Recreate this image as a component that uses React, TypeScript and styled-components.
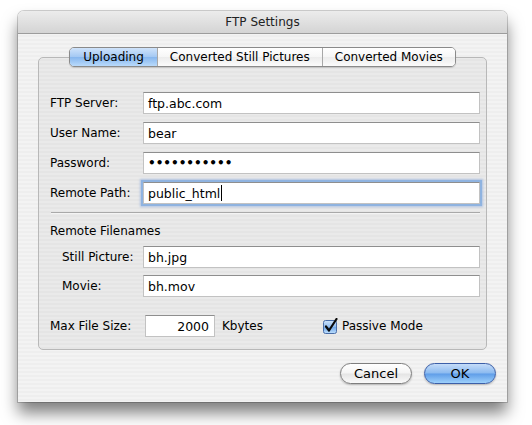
import React from 'react';
import styled, { createGlobalStyle } from 'styled-components';

const GlobalStyle = createGlobalStyle`
    html, body {
        margin: 0;
        padding: 0;
        background: #ffffff;
    }
    body {
        font-family: 'DejaVu Sans', 'Liberation Sans', sans-serif;
        font-size: 12px;
        color: #000;
    }
`;

const Page = styled.div`
    width: 532px;
    height: 425px;
    padding: 11px 0 0 18px;
    box-sizing: border-box;
`;

const Window = styled.div`
    width: 489px;
    height: 391px;
    border-radius: 6px 6px 0 0;
    overflow: hidden;
    box-shadow: 0 0 0 1px rgba(0, 0, 0, 0.18), 0 11px 16px rgba(0, 0, 0, 0.5);
    display: flex;
    flex-direction: column;
    background: repeating-linear-gradient(#eeeeee 0 2px, #f3f3f3 2px 4px);
`;

const TitleBar = styled.div`
    height: 22px;
    flex-shrink: 0;
    display: flex;
    align-items: center;
    justify-content: center;
    background: linear-gradient(#ececec, #d4d4d4);
    border-bottom: 1px solid #9c9c9c;
    color: #222;
`;

const Body = styled.div`
    padding-top: 13px;
    display: flex;
    flex-direction: column;
`;

const TabStrip = styled.div`
    align-self: center;
    display: flex;
    height: 20px;
    box-sizing: border-box;
    margin-bottom: -10px;
    position: relative;
    z-index: 1;
    border: 1px solid #8a8a8a;
    border-radius: 5px;
    overflow: hidden;
    box-shadow: 0 1px 1px rgba(0, 0, 0, 0.15);
`;

const Tab = styled.div<{ $selected?: boolean }>`
    padding: 0 12px;
    display: flex;
    align-items: center;
    line-height: 18px;
    background: ${(p) =>
        p.$selected
            ? 'linear-gradient(#cfe3fb 0%, #a3c8f3 50%, #86b6ee 51%, #b9dafb 100%)'
            : 'linear-gradient(#ffffff 0%, #f6f6f6 50%, #ececec 51%, #fbfbfb 100%)'};
    border-left: 1px solid #a8a8a8;
    &:first-child {
        border-left: none;
        padding: 0 13px;
    }
`;

const GroupBox = styled.div`
    margin: 0 20px;
    height: 293px;
    box-sizing: border-box;
    border: 1px solid #b8b8b8;
    border-radius: 5px;
    background: rgba(0, 0, 0, 0.035);
    padding: 34px 6px 11px 11px;
    display: flex;
    flex-direction: column;
`;

const Row = styled.div<{ $indent?: number; $gap?: number }>`
    display: flex;
    align-items: center;
    height: 22px;
    margin-bottom: ${(p) => p.$gap ?? 8}px;
    padding-left: ${(p) => p.$indent ?? 0}px;
`;

const Label = styled.div<{ $width: number }>`
    width: ${(p) => p.$width}px;
    flex-shrink: 0;
`;

const Field = styled.div<{ $focused?: boolean; $width?: number; $right?: boolean }>`
    ${(p) => (p.$width ? `width: ${p.$width}px;` : 'flex: 1;')}
    height: 22px;
    box-sizing: border-box;
    background: #fff;
    border: 1px solid #c2c2c2;
    border-top-color: #8e8e8e;
    padding: 0 5px 0 4px;
    display: flex;
    align-items: center;
    justify-content: ${(p) => (p.$right ? 'flex-end' : 'flex-start')};
    font-size: 12.5px;
    box-shadow: ${(p) => (p.$focused ? '0 0 0 2px #8fb3e0, 0 0 2px 3px rgba(120, 160, 220, 0.5)' : 'none')};
`;

const Bullets = styled.span`
    font-size: 12px;
    font-weight: bold;
`;

const Caret = styled.span`
    display: inline-block;
    width: 1px;
    height: 16px;
    background: #000;
    margin-left: 1px;
`;

const Separator = styled.div`
    height: 1px;
    background: #a9a9a9;
    margin: 0 0 0 1px;
    border-bottom: 1px solid #f4f4f4;
`;

const Heading = styled.div`
    line-height: 16px;
    margin: 9px 0 7px;
`;

const BottomRow = styled(Row)`
    margin-top: 10px;
    margin-bottom: 0;
`;

const Unit = styled.span`
    margin-left: 7px;
`;

const CheckLabel = styled.label`
    display: flex;
    align-items: center;
    white-space: nowrap;
    margin-left: 60px;
    gap: 3px;
`;

const ButtonRow = styled.div`
    display: flex;
    justify-content: flex-end;
    gap: 12px;
    padding-right: 11px;
    margin-top: 13px;
`;

const PushButton = styled.button<{ $default?: boolean }>`
    width: 72px;
    height: 21px;
    border-radius: 11px;
    font-family: inherit;
    font-size: 13px;
    color: #000;
    padding: 0;
    border: 1px solid ${(p) => (p.$default ? '#3c5fa8' : '#7e7e7e')};
    background: ${(p) =>
        p.$default
            ? 'linear-gradient(#c5dcf8 0%, #8bbaf0 48%, #5f9de8 52%, #9dd0fb 100%)'
            : 'linear-gradient(#ffffff 0%, #f4f4f4 48%, #e4e4e4 52%, #fafafa 100%)'};
    box-shadow: 0 1px 2px rgba(0, 0, 0, 0.25);
`;

const CheckBox = () => (
    <svg width="16" height="16" viewBox="0 0 16 16">
        <defs>
            <linearGradient id="cb" x1="0" y1="0" x2="0" y2="1">
                <stop offset="0" stopColor="#cfe4fb" />
                <stop offset="0.5" stopColor="#8fbcf0" />
                <stop offset="0.51" stopColor="#6fa7ea" />
                <stop offset="1" stopColor="#bfe0fd" />
            </linearGradient>
        </defs>
        <rect x="0.5" y="2.5" width="13" height="13" rx="2" fill="url(#cb)" stroke="#4a6ea8" />
        <path d="M3 8.5 L6 12.5 L13.5 1" fill="none" stroke="#0a0a0a" strokeWidth="2.2" strokeLinecap="round" strokeLinejoin="round" />
    </svg>
);

export default function App() {
    return (
        <Page>
            <GlobalStyle />
            <Window>
                <TitleBar>FTP Settings</TitleBar>
                <Body>
                    <TabStrip>
                        <Tab $selected>Uploading</Tab>
                        <Tab>Converted Still Pictures</Tab>
                        <Tab>Converted Movies</Tab>
                    </TabStrip>
                    <GroupBox>
                        <Row>
                            <Label $width={93}>FTP Server:</Label>
                            <Field>ftp.abc.com</Field>
                        </Row>
                        <Row>
                            <Label $width={93}>User Name:</Label>
                            <Field>bear</Field>
                        </Row>
                        <Row>
                            <Label $width={93}>Password:</Label>
                            <Field>
                                <Bullets>•••••••••••</Bullets>
                            </Field>
                        </Row>
                        <Row>
                            <Label $width={93}>Remote Path:</Label>
                            <Field $focused>
                                public_html
                                <Caret />
                            </Field>
                        </Row>
                        <Separator />
                        <Heading>Remote Filenames</Heading>
                        <Row $indent={12} $gap={7}>
                            <Label $width={81}>Still Picture:</Label>
                            <Field>bh.jpg</Field>
                        </Row>
                        <Row $indent={12}>
                            <Label $width={81}>Movie:</Label>
                            <Field>bh.mov</Field>
                        </Row>
                        <BottomRow>
                            <Label $width={95}>Max File Size:</Label>
                            <Field $width={70} $right>
                                2000
                            </Field>
                            <Unit>Kbytes</Unit>
                            <CheckLabel>
                                <CheckBox />
                                Passive Mode
                            </CheckLabel>
                        </BottomRow>
                    </GroupBox>
                    <ButtonRow>
                        <PushButton>Cancel</PushButton>
                        <PushButton $default>OK</PushButton>
                    </ButtonRow>
                </Body>
            </Window>
        </Page>
    );
}
